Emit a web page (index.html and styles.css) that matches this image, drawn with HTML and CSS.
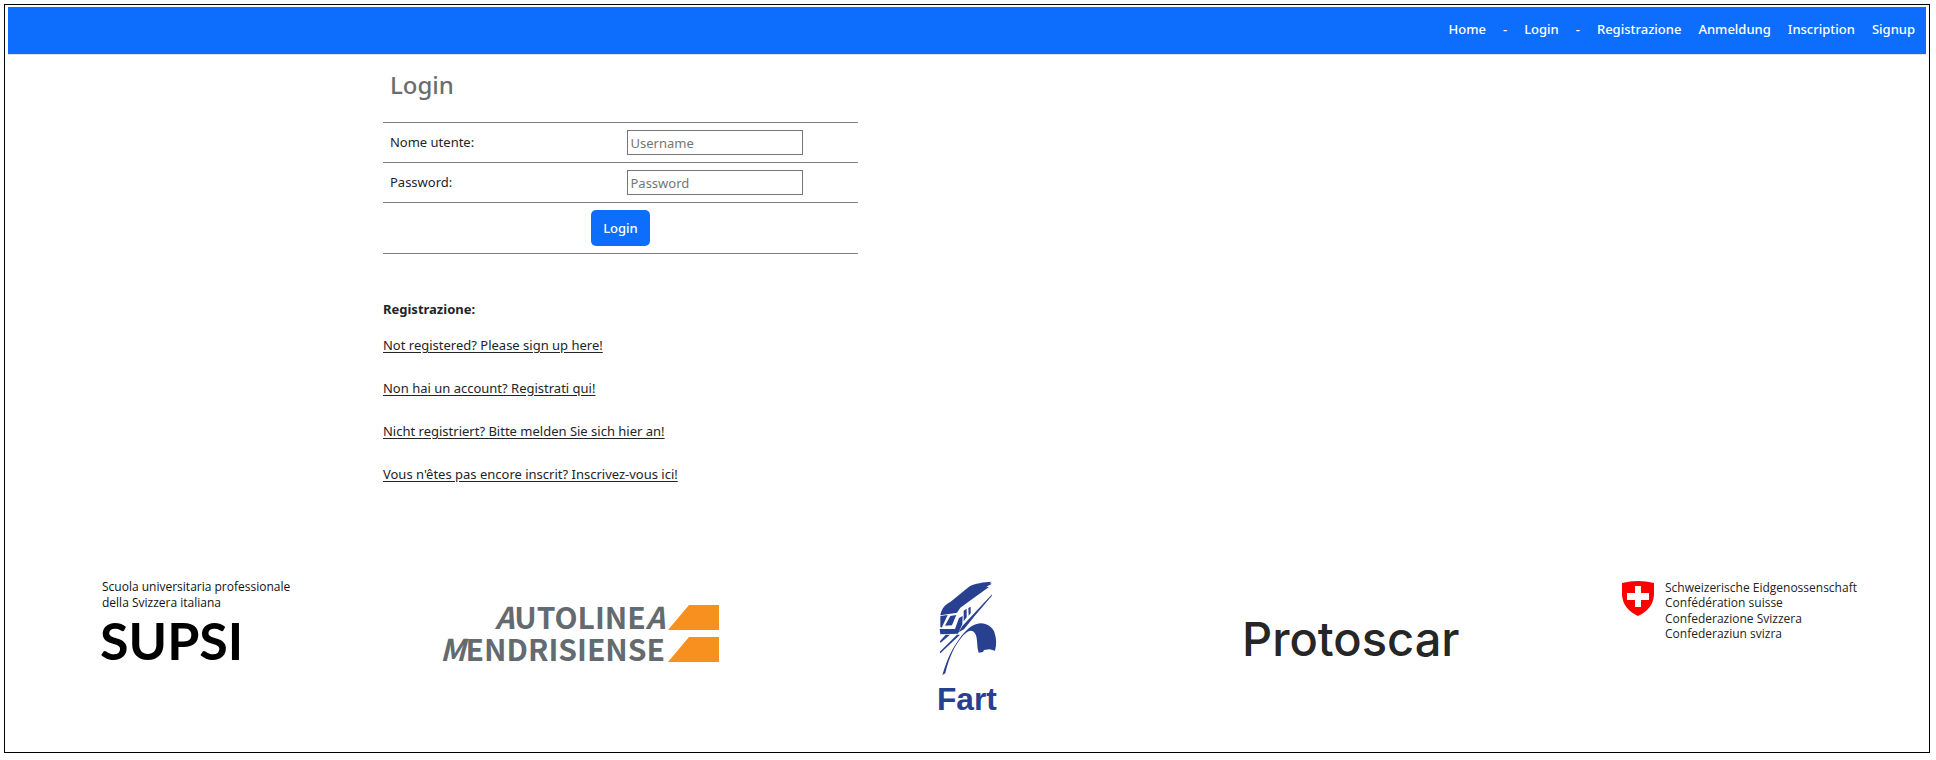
FILE: index.html
```html
<!DOCTYPE html>
<html lang="it">
<head>
<meta charset="utf-8">
<title>Login</title>
<link rel="stylesheet" href="styles.css">
</head>
<body>
<div class="page">
  <header class="topbar">
    <nav class="nav">
      <a href="#home">Home</a>
      <span>-</span>
      <a href="#login">Login</a>
      <span>-</span>
      <a href="#it">Registrazione</a>
      <a href="#de">Anmeldung</a>
      <a href="#fr">Inscription</a>
      <a href="#en">Signup</a>
    </nav>
  </header>

  <main class="content">
    <form id="login">
      <h1 class="title">Login</h1>
      <table class="form-table">
        <tr>
          <td><label for="username">Nome utente:</label></td>
          <td><input class="field" id="username" type="text" placeholder="Username"></td>
        </tr>
        <tr>
          <td><label for="password">Password:</label></td>
          <td><input class="field" id="password" type="password" placeholder="Password"></td>
        </tr>
        <tr>
          <td colspan="2" class="actions"><button class="btn" type="submit">Login</button></td>
        </tr>
      </table>
    </form>

    <section class="signup">
      <h2 class="subtitle">Registrazione:</h2>
      <ul class="links">
        <li><a href="#en">Not registered? Please sign up here!</a></li>
        <li><a href="#it">Non hai un account? Registrati qui!</a></li>
        <li><a href="#de">Nicht registriert? Bitte melden Sie sich hier an!</a></li>
        <li><a href="#fr">Vous n'êtes pas encore inscrit? Inscrivez-vous ici!</a></li>
      </ul>
    </section>
  </main>

  <footer class="logos">
    <svg width="200" height="110" viewBox="0 0 200 110">
      <text class="supsi-small" x="2" y="20">Scuola universitaria professionale</text>
      <text class="supsi-small" x="2" y="36">della Svizzera italiana</text>
      <text class="supsi-big" x="0" y="89">SUPSI</text>
    </svg>
    <svg width="292" height="110" viewBox="0 0 292 110">
      <text class="auto" x="228" y="58" text-anchor="end"><tspan class="slant">A</tspan>UTOLINE<tspan class="slant">A</tspan></text>
      <text class="auto" x="228" y="90" text-anchor="end"><tspan class="slant">M</tspan>ENDRISIENSE</text>
      <path fill="#f7901e" d="M252 34h30v25h-51zM252 66h30v25h-51z"/>
    </svg>
    <svg width="100" height="150" viewBox="-8 0 300 450">
      <g fill="#27408f">
        <path d="M62 133C66 112 76 101 92 93L148 47C166 37 192 33 216 32L210 37L217 38L200 47L208 48L161 82L122 110L112 125L82 130Z"/>
        <path d="M62 135L84 132L66 170L62 168ZM92 135L110 132L97 163L76 164ZM60 174H106L118 141L129 135L128 160L115 188L62 190Z"/>
        <path d="M132 119L141 113V139L132 151ZM146 111L153 107V127L147 134Z"/>
        <path d="M117 184L128 165L154 137L217 70L216 75L163 137L133 175Z"/>
        <path d="M61 211L78 191H91L62 216ZM60 243L112 191H121L62 247Z"/>
        <path d="M68 312C79 276 91 243 113 212C130 188 147 166 171 159C194 152 216 165 224 183C231 203 231 221 226 239L210 235L193 237L190 243L177 245C169 221 177 192 160 181C148 174 132 190 119 208C96 240 85 274 77 307Z"/>
      </g>
      <text class="fart" x="52" y="416">Fart</text>
    </svg>
    <svg width="230" height="110" viewBox="0 0 230 110">
      <text class="proto" x="6" y="85">Protoscar</text>
    </svg>
    <svg width="240" height="110" viewBox="0 0 240 110">
      <path fill="#f00" d="M8 12Q24 8 40 12V24Q39 38 24 45Q9 38 8 24Z"/>
      <path fill="#fff" d="M21 15h6v7h8v7h-8v7h-6v-7h-8v-7h8z"/>
      <g class="swiss">
        <text x="51" y="21">Schweizerische Eidgenossenschaft</text>
        <text x="51" y="36">Confédération suisse</text>
        <text x="51" y="52">Confederazione Svizzera</text>
        <text x="51" y="67">Confederaziun svizra</text>
      </g>
    </svg>
  </footer>
</div>
</body>
</html>
```
FILE: styles.css
```css
* { box-sizing: border-box; }

body {
  margin: 4px 6px 7px 4px;
  background: #fff;
  color: #212529;
  font-family: "Noto Sans", "Open Sans", sans-serif;
  font-size: 13px;
  line-height: 21px;
}

.page {
  min-height: calc(100vh - 11px);
  padding: 2px 3px;
  border: 1px solid #000;
}

.topbar {
  height: 48px;
  padding: 12px 11px;
  background: #0d6efd;
  border-bottom: 1px solid #dee2e6;
}

.nav {
  display: flex;
  justify-content: flex-end;
  gap: 17px;
  color: #fff;
  font-weight: 500;
}

.nav a {
  color: #fff;
  text-decoration: none;
}

.content { padding-left: 19.55%; }

.title {
  margin: 0;
  padding: 11px 7px 18px;
  color: #6c6c6c;
  font-size: 24px;
  font-weight: 500;
  line-height: 38px;
}

.form-table {
  width: 475px;
  max-width: 100%;
  table-layout: fixed;
  border-collapse: collapse;
  border-top: 1px solid #808080;
}

.form-table td {
  padding: 7px;
  border-bottom: 1px solid #808080;
}

.field {
  display: block;
  width: 176px;
  height: 25px;
  padding: 1px 2px;
  border: 1px solid #767676;
  background: #fff;
  color: #212529;
  font: inherit;
}

.field::placeholder { color: #757575; }

.actions { text-align: center; }

.btn {
  display: block;
  margin: 0 auto;
  height: 36px;
  padding: 0 12px;
  border: 0;
  border-radius: 5px;
  background: #0d6efd;
  color: #fff;
  font: inherit;
  font-weight: 500;
}

.signup { padding-top: 45px; }

.subtitle {
  margin: 0 0 15px;
  font-size: 13px;
  font-weight: 700;
  line-height: 21px;
}

.links {
  display: grid;
  gap: 22px;
  margin: 0;
  padding: 0;
  list-style: none;
}

.links a {
  color: #212529;
  text-underline-offset: 2px;
}

.logos {
  display: grid;
  grid-template-columns: repeat(5, 1fr);
  justify-items: center;
  margin-top: 86px;
}

.logos svg { overflow: visible; }

.supsi-small {
  fill: #111;
  font: 12px "Open Sans", sans-serif;
}

.supsi-big {
  fill: #000;
  font: 700 52px Lato, sans-serif;
}

.auto {
  fill: #646b70;
  font: 700 30px "Noto Sans CJK SC", sans-serif;
}

.slant { font-style: italic; }

.fart {
  fill: #27408f;
  font: 700 95px "Liberation Sans", sans-serif;
}

.proto {
  fill: #262626;
  font: 500 47px Inter, sans-serif;
}

.swiss {
  fill: #222;
  font: 12px "Open Sans", sans-serif;
}
```
